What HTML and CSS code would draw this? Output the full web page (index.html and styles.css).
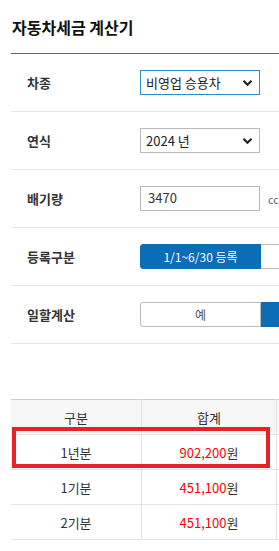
FILE: index.html
```html
<!DOCTYPE html>
<html>
    <head>
        <meta charset="UTF-8">
        <title>자동차세금 계산기</title>
        <meta name="viewport" content="width=device-width, initial-scale=1.0">
        <link rel="stylesheet" href="styles.css">
    </head>
    <body>
        <main class="calc">
            <h1 class="title">자동차세금 계산기</h1>

            <div class="form">
                <div class="row">
                    <span class="label">차종</span>
                    <div class="select focus">
                        <span>비영업 승용차</span>
                        <svg width="11" height="8" viewBox="0 0 11 8"><path d="M1.5 1.8 L5.5 5.8 L9.5 1.8" fill="none" stroke="#222" stroke-width="2.2"/></svg>
                    </div>
                </div>
                <div class="row">
                    <span class="label">연식</span>
                    <div class="select">
                        <span>2024 년</span>
                        <svg width="11" height="8" viewBox="0 0 11 8"><path d="M1.5 1.8 L5.5 5.8 L9.5 1.8" fill="none" stroke="#222" stroke-width="2.2"/></svg>
                    </div>
                </div>
                <div class="row">
                    <span class="label">배기량</span>
                    <div class="input">3470</div>
                    <span class="unit">cc</span>
                </div>
                <div class="row">
                    <span class="label">등록구분</span>
                    <div class="toggle">
                        <button class="on">1/1~6/30 등록</button>
                        <button></button>
                    </div>
                </div>
                <div class="row">
                    <span class="label">일할계산</span>
                    <div class="toggle">
                        <button>예</button>
                        <button class="on"></button>
                    </div>
                </div>
            </div>

            <div class="result">
                <table class="table">
                    <thead>
                        <tr><th>구분</th><th>합계</th><th></th></tr>
                    </thead>
                    <tbody>
                        <tr><td>1년분</td><td><b>902,200</b>원</td><td></td></tr>
                        <tr><td>1기분</td><td><b>451,100</b>원</td><td></td></tr>
                        <tr><td>2기분</td><td><b>451,100</b>원</td><td></td></tr>
                    </tbody>
                </table>
                <div class="mark"></div>
            </div>
        </main>
    </body>
</html>
```

FILE: styles.css
```css
html
{
    overflow: hidden;
}
body
{
    margin: 0;
    padding: 0;
    background: #fff;
    color: #333;
    font-family: "Noto Sans CJK KR", "Noto Sans", sans-serif;
}
.calc
{
    width: 480px;
    padding-left: 11px;
}

.title
{
    margin: 0;
    padding: 12px 0 11px 1px;
    line-height: 30px;
    font-size: 16px;
    font-weight: 700;
    color: #111;
    border-bottom: 1px solid #666;
}

.form .row
{
    display: flex;
    align-items: center;
    height: 57px;
    padding-left: 16px;
    border-bottom: 1px solid #e6e6e6;
}
.form .label
{
    width: 113px;
    font-size: 13px;
    font-weight: 700;
    color: #333;
}
.form .select
{
    box-sizing: border-box;
    display: flex;
    align-items: center;
    justify-content: space-between;
    width: 120px;
    height: 25px;
    padding: 0 6px 0 5px;
    border: 1px solid #bbb;
    font-size: 13px;
    color: #222;
}
.form .select.focus { border-color: #2a8fcc; }
.form .input
{
    box-sizing: border-box;
    width: 120px;
    height: 25px;
    padding-left: 7px;
    line-height: 22px;
    border: 1px solid #bbb;
    font-size: 13px;
    color: #333;
}
.form .unit
{
    margin-left: 8px;
    font-size: 11px;
    color: #666;
}
.form .toggle
{
    display: flex;
}
.form .toggle button
{
    box-sizing: border-box;
    width: 121px;
    height: 25px;
    padding: 0;
    font-family: inherit;
    font-size: 12px;
    color: #555;
    background: #fff;
    border: 1px solid #bbb;
}
.form .toggle button:first-child { border-radius: 3px 0 0 3px; }
.form .toggle button + button { border-left: none; }
.form .toggle button.on
{
    color: #fff;
    background: #0a6db5;
    border-color: #0a6db5;
}

.result
{
    position: relative;
    margin-top: 55px;
}
.table
{
    border-collapse: collapse;
    font-size: 13px;
    color: #333;
}
.table th,
.table td
{
    height: 34px;
    padding: 0;
    text-align: center;
    border: 1px solid #e4e4e4;
    border-left: none;
}
.table th
{
    font-weight: 400;
    background: #f6f6f6;
    border-top: 1px solid #ccc;
}
.table th:nth-child(1), .table td:nth-child(1) { width: 130px; }
.table th:nth-child(2), .table td:nth-child(2) { width: 134px; }
.table th:nth-child(3), .table td:nth-child(3) { width: 134px; }
.table td b
{
    font-weight: 400;
    color: #f00;
}
.mark
{
    position: absolute;
    top: 28px;
    left: 1px;
    width: 250px;
    height: 33px;
    border: 4px solid #e8202a;
}
```
